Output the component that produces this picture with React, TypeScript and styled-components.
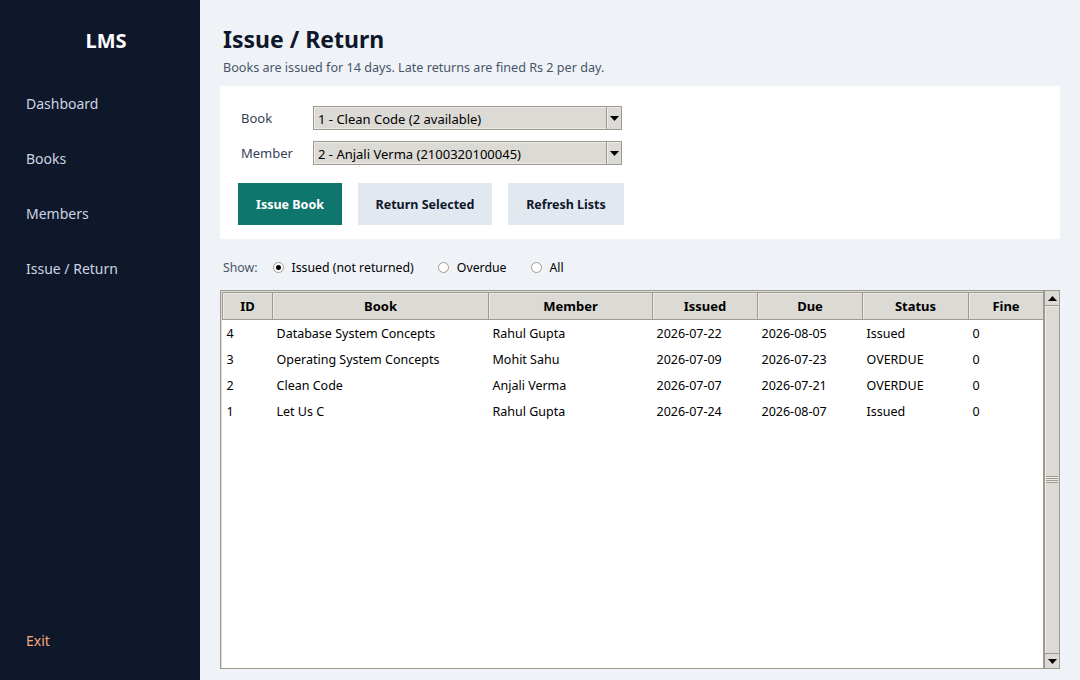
import styled, { createGlobalStyle } from 'styled-components'

const GlobalStyle = createGlobalStyle`
    html, body {
        margin: 0;
        padding: 0;
        background: #eff3f8;
    }
    body {
        font-family: 'Noto Sans', 'Open Sans', sans-serif;
    }
`

type Loan = {
    id: number
    book: string
    member: string
    issued: string
    due: string
    status: string
    fine: number
}

const loans: Loan[] = [
    {id: 4, book: 'Database System Concepts', member: 'Rahul Gupta', issued: '2026-07-22', due: '2026-08-05', status: 'Issued', fine: 0},
    {id: 3, book: 'Operating System Concepts', member: 'Mohit Sahu', issued: '2026-07-09', due: '2026-07-23', status: 'OVERDUE', fine: 0},
    {id: 2, book: 'Clean Code', member: 'Anjali Verma', issued: '2026-07-07', due: '2026-07-21', status: 'OVERDUE', fine: 0},
    {id: 1, book: 'Let Us C', member: 'Rahul Gupta', issued: '2026-07-24', due: '2026-08-07', status: 'Issued', fine: 0},
]

const columns = [
    {key: 'id', title: 'ID', width: 50},
    {key: 'book', title: 'Book', width: 216},
    {key: 'member', title: 'Member', width: 164},
    {key: 'issued', title: 'Issued', width: 105},
    {key: 'due', title: 'Due', width: 105},
    {key: 'status', title: 'Status', width: 106},
    {key: 'fine', title: 'Fine', width: 75},
] as const

const navItems = ['Dashboard', 'Books', 'Members', 'Issue / Return']

const Arrow = ({up}: {up?: boolean}) => (
    <svg width="9" height="5" viewBox="0 0 9 5">
        {up ? <polygon points="0,5 9,5 4.5,0" fill="#000" /> : <polygon points="0,0 9,0 4.5,5" fill="#000" />}
    </svg>
)

const App = () => {
    return (
        <>
            <GlobalStyle />
            <Shell>
                <Sidebar>
                    <Brand>LMS</Brand>
                    <Nav>
                        {navItems.map((item) => (
                            <NavItem key={item}>{item}</NavItem>
                        ))}
                    </Nav>
                    <ExitItem>Exit</ExitItem>
                </Sidebar>
                <Main>
                    <Title>Issue / Return</Title>
                    <Subtitle>Books are issued for 14 days. Late returns are fined Rs 2 per day.</Subtitle>
                    <Card>
                        <FormGrid>
                            <FieldLabel>Book</FieldLabel>
                            <Combo>
                                <ComboText>1 - Clean Code (2 available)</ComboText>
                                <ComboButton><Arrow /></ComboButton>
                            </Combo>
                            <FieldLabel>Member</FieldLabel>
                            <Combo>
                                <ComboText>2 - Anjali Verma (2100320100045)</ComboText>
                                <ComboButton><Arrow /></ComboButton>
                            </Combo>
                        </FormGrid>
                        <ButtonRow>
                            <ActionButton primary width={104}>Issue Book</ActionButton>
                            <ActionButton width={134}>Return Selected</ActionButton>
                            <ActionButton width={116}>Refresh Lists</ActionButton>
                        </ButtonRow>
                    </Card>
                    <FilterRow>
                        <ShowLabel>Show:</ShowLabel>
                        <RadioOption><Radio checked />Issued (not returned)</RadioOption>
                        <RadioOption><Radio />Overdue</RadioOption>
                        <RadioOption><Radio />All</RadioOption>
                    </FilterRow>
                    <TableFrame>
                        <TableArea>
                            <LoanTable>
                                <colgroup>
                                    {columns.map((c) => <col key={c.key} style={{width: c.width}} />)}
                                </colgroup>
                                <thead>
                                    <tr>
                                        {columns.map((c) => <HeadCell key={c.key}>{c.title}</HeadCell>)}
                                    </tr>
                                </thead>
                                <tbody>
                                    {loans.map((loan) => (
                                        <tr key={loan.id}>
                                            {columns.map((c) => <Cell key={c.key}>{loan[c.key]}</Cell>)}
                                        </tr>
                                    ))}
                                </tbody>
                            </LoanTable>
                        </TableArea>
                        <ScrollBar>
                            <ScrollButton><Arrow up /></ScrollButton>
                            <ScrollThumb>
                                <Grip />
                            </ScrollThumb>
                            <ScrollButton><Arrow /></ScrollButton>
                        </ScrollBar>
                    </TableFrame>
                </Main>
            </Shell>
        </>
    )
}

const Shell = styled.div`
    display: flex;
    width: 1080px;
    height: 680px;
    overflow: hidden;
`

const Sidebar = styled.aside`
    width: 200px;
    flex-shrink: 0;
    background: #0f172a;
    display: flex;
    flex-direction: column;
    padding: 28px 0 29px 26px;
    box-sizing: border-box;
`

const Brand = styled.div`
    width: 160px;
    text-align: center;
    color: #ffffff;
    font-weight: 700;
    font-size: 20px;
    line-height: 26px;
    margin-bottom: 40px;
`

const Nav = styled.nav`
    display: flex;
    flex-direction: column;
    gap: 35px;
    flex: 1;
`

const NavItem = styled.div`
    color: #cbd5e1;
    font-size: 14px;
    line-height: 20px;
`

const ExitItem = styled(NavItem)`
    color: #f4a77a;
`

const Main = styled.main`
    flex: 1;
    display: flex;
    flex-direction: column;
    padding: 24px 20px 11px 20px;
    min-width: 0;
`

const Title = styled.h1`
    margin: 0 0 0 3px;
    font-size: 23px;
    line-height: 30px;
    font-weight: 700;
    color: #0f172a;
`

const Subtitle = styled.p`
    margin: 6px 0 0 3px;
    font-size: 12.6px;
    line-height: 16px;
    color: #475569;
`

const Card = styled.section`
    margin-top: 10px;
    background: #ffffff;
    padding: 20px 18px 14px 18px;
    display: flex;
    flex-direction: column;
    gap: 18px;
`

const FormGrid = styled.div`
    display: grid;
    grid-template-columns: 72px 309px;
    row-gap: 11px;
    align-items: center;
    padding-left: 3px;
`

const FieldLabel = styled.span`
    font-size: 13px;
    color: #334155;
`

const Combo = styled.div`
    display: flex;
    height: 24px;
    box-sizing: border-box;
    border: 1px solid #9e9a91;
    background: #dcdad5;
`

const ComboText = styled.span`
    flex: 1;
    padding-left: 3px;
    font-size: 13px;
    line-height: 22px;
    color: #000;
    border: 1px solid #eeebe7;
    border-right: none;
`

const ComboButton = styled.span`
    width: 14px;
    display: flex;
    align-items: center;
    justify-content: center;
    border-left: 1px solid #9e9a91;
    box-shadow: inset 1px 1px #eeebe7;
`

const ButtonRow = styled.div`
    display: flex;
    gap: 16px;
`

const ActionButton = styled.button<{primary?: boolean; width: number}>`
    width: ${({width}) => width}px;
    height: 42px;
    border: none;
    padding: 0;
    font-family: inherit;
    font-size: 12.5px;
    font-weight: 700;
    background: ${({primary}) => (primary ? '#0f766e' : '#e2e8f0')};
    color: ${({primary}) => (primary ? '#ffffff' : '#0f172a')};
`

const FilterRow = styled.div`
    display: flex;
    align-items: center;
    height: 20px;
    margin: 18px 0 13px 3px;
    font-size: 12.3px;
`

const ShowLabel = styled.span`
    color: #475569;
    margin-right: 15px;
`

const RadioOption = styled.label`
    display: flex;
    align-items: center;
    gap: 8px;
    color: #000;
    margin-right: 24px;
`

const Radio = styled.span<{checked?: boolean}>`
    width: 9px;
    height: 9px;
    border-radius: 50%;
    border: 1px solid #9e9a91;
    background: #ffffff;
    position: relative;
    &::after {
        content: '';
        display: ${({checked}) => (checked ? 'block' : 'none')};
        position: absolute;
        left: 2px;
        top: 2px;
        width: 5px;
        height: 5px;
        border-radius: 50%;
        background: #000;
    }
`

const TableFrame = styled.div`
    flex: 1;
    display: flex;
    min-height: 0;
`

const TableArea = styled.div`
    flex: 1;
    background: #ffffff;
    border: 1px solid #9e9a91;
    box-shadow: inset 1px 1px #dcdad5;
    padding: 1px 0 0 1px;
    overflow: hidden;
`

const LoanTable = styled.table`
    table-layout: fixed;
    border-collapse: collapse;
    width: 821px;
    font-size: 12.5px;
`

const HeadCell = styled.th`
    height: 26px;
    padding: 0;
    background: #dcdad5;
    border: 1px solid #9e9a91;
    box-shadow: inset 1px 1px #eeebe7;
    font-weight: 700;
    font-size: 13px;
    color: #000;
    text-align: center;
`

const Cell = styled.td`
    height: 26px;
    padding: 0 0 0 4px;
    color: #000;
    white-space: nowrap;
    overflow: hidden;
`

const ScrollBar = styled.div`
    width: 16px;
    display: flex;
    flex-direction: column;
    background: #dcdad5;
    border: 1px solid #9e9a91;
    box-sizing: border-box;
`

const ScrollButton = styled.div`
    height: 14px;
    display: flex;
    align-items: center;
    justify-content: center;
    border-bottom: 1px solid #9e9a91;
    &:last-child {
        border-bottom: none;
        border-top: 1px solid #9e9a91;
    }
`

const ScrollThumb = styled.div`
    flex: 1;
    display: flex;
    align-items: center;
    justify-content: center;
    box-shadow: inset 1px 1px #eeebe7;
`

const Grip = styled.div`
    width: 12px;
    height: 7px;
    background: repeating-linear-gradient(to bottom, #9e9a91 0 1px, #eeebe7 1px 2px);
`

export default App
